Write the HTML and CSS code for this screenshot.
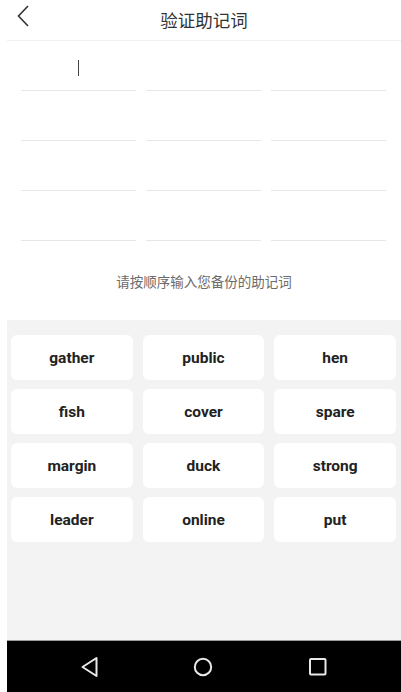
FILE: index.html
```html
<!DOCTYPE html>
<html lang="zh-CN">
<head>
    <meta charset="UTF-8">
    <meta name="viewport" content="width=device-width, initial-scale=1.0">
    <title>验证助记词</title>
    <link rel="stylesheet" href="styles.css">
</head>
<body>
    <div class="screen">
        <div class="top-bar">
            <a class="back" href="#">
                <svg width="12" height="22" viewBox="0 0 12 22">
                    <path d="M11 1 L1.5 11 L11 21" fill="none" stroke="#333" stroke-width="1.6"/>
                </svg>
            </a>
            <h1>验证助记词</h1>
        </div>

        <div class="word-grid">
            <div class="cell"><span class="caret"></span></div>
            <div class="cell"></div>
            <div class="cell"></div>
            <div class="cell"></div>
            <div class="cell"></div>
            <div class="cell"></div>
            <div class="cell"></div>
            <div class="cell"></div>
            <div class="cell"></div>
            <div class="cell"></div>
            <div class="cell"></div>
            <div class="cell"></div>
        </div>

        <p class="hint">请按顺序输入您备份的助记词</p>

        <div class="keyboard">
            <button class="key">gather</button>
            <button class="key">public</button>
            <button class="key">hen</button>
            <button class="key">fish</button>
            <button class="key">cover</button>
            <button class="key">spare</button>
            <button class="key">margin</button>
            <button class="key">duck</button>
            <button class="key">strong</button>
            <button class="key">leader</button>
            <button class="key">online</button>
            <button class="key">put</button>
        </div>

        <div class="nav-bar">
            <svg width="20" height="22" viewBox="0 0 20 22">
                <path d="M16.5 2 L16.5 20 L2.5 11 Z" fill="none" stroke="#e8e8e8" stroke-width="2" stroke-linejoin="round"/>
            </svg>
            <svg width="22" height="22" viewBox="0 0 22 22">
                <circle cx="11" cy="11" r="8.2" fill="none" stroke="#e8e8e8" stroke-width="2"/>
            </svg>
            <svg width="22" height="22" viewBox="0 0 22 22">
                <rect x="3" y="3" width="15.5" height="15.5" rx="1" fill="none" stroke="#e8e8e8" stroke-width="2"/>
            </svg>
        </div>
    </div>
</body>
</html>
```

FILE: styles.css
```css
:root {
    --text-color: #222;
    --hint-color: #6b6b6b;
    --line-color: #e6e6e6;
    --panel-color: #f3f3f3;
}
body {
    margin: 0;
    padding: 0;
    background: #fff;
    font-family: Roboto, "Noto Sans CJK SC", sans-serif;
    color: var(--text-color);
}
.screen {
    margin-left: 7px;
    height: 692px;
    display: flex;
    flex-direction: column;
}
.top-bar {
    height: 40px;
    border-bottom: 1px solid #f0f0f0;
    display: flex;
    align-items: center;
    justify-content: center;
    position: relative;
}
.top-bar h1 {
    margin: 0 0 1px;
    font-size: 17.5px;
    font-weight: normal;
    color: #333;
    font-family: "Noto Sans CJK SC", sans-serif;
}
.back {
    position: absolute;
    left: 10px;
    top: 5px;
    display: flex;
}
.word-grid {
    display: grid;
    grid-template-columns: repeat(3, 1fr);
    column-gap: 10px;
    padding: 0 15px 0 14px;
}
.cell {
    height: 49px;
    border-bottom: 1.5px solid var(--line-color);
    box-sizing: content-box;
    display: flex;
    justify-content: center;
    align-items: flex-start;
}
.caret {
    width: 1px;
    height: 16px;
    margin-top: 19px;
    background: #444;
}
.hint {
    margin: 30px 0 29px;
    line-height: 20px;
    text-align: center;
    font-size: 13.5px;
    color: var(--hint-color);
    font-family: "Noto Sans CJK SC", sans-serif;
}
.keyboard {
    flex: 1;
    background: var(--panel-color);
    padding: 15px 5px 0 4px;
    display: grid;
    grid-template-columns: repeat(3, 1fr);
    grid-auto-rows: 45px;
    align-content: start;
    gap: 9px 10px;
}
.key {
    border: none;
    background: #fff;
    border-radius: 6px;
    font-family: Roboto, sans-serif;
    font-weight: bold;
    font-size: 15.5px;
    color: var(--text-color);
    padding: 0;
}
.nav-bar {
    height: 51px;
    border-top: 1px solid #9a9a9a;
    background: #000;
    display: flex;
    align-items: center;
    justify-content: center;
    gap: 92.5px;
}
```
